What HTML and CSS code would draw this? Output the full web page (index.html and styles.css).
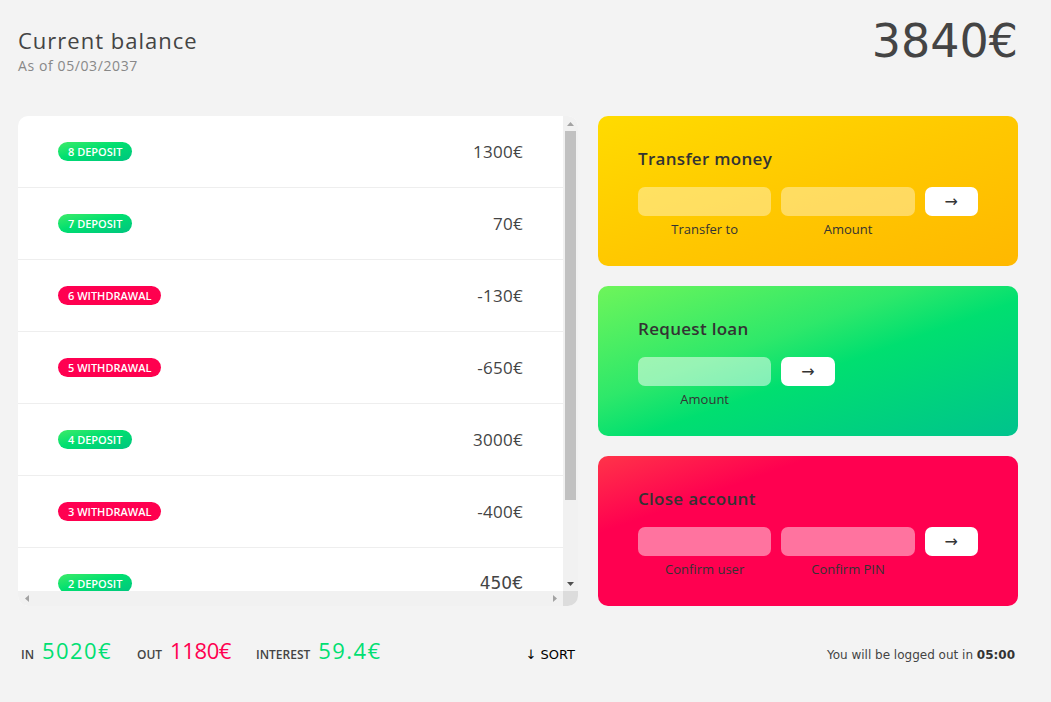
FILE: index.html
```html
<!DOCTYPE html>
<html lang="en">
<head>
<meta charset="UTF-8">
<title>Bankist</title>
<link rel="stylesheet" href="styles.css">
</head>
<body>
<main class="app">
  <div class="balance">
    <div class="balance__info">
      <p class="balance__label">Current balance</p>
      <p class="balance__date">As of <span>05/03/2037</span></p>
    </div>
    <p class="balance__value">3840€</p>
  </div>

  <section class="movements">
    <div class="movements__list">
      <div class="movements__row">
        <div class="movements__type movements__type--deposit">8 deposit</div>
        <div class="movements__value">1300€</div>
      </div>
      <div class="movements__row">
        <div class="movements__type movements__type--deposit">7 deposit</div>
        <div class="movements__value">70€</div>
      </div>
      <div class="movements__row">
        <div class="movements__type movements__type--withdrawal">6 withdrawal</div>
        <div class="movements__value">-130€</div>
      </div>
      <div class="movements__row">
        <div class="movements__type movements__type--withdrawal">5 withdrawal</div>
        <div class="movements__value">-650€</div>
      </div>
      <div class="movements__row">
        <div class="movements__type movements__type--deposit">4 deposit</div>
        <div class="movements__value">3000€</div>
      </div>
      <div class="movements__row">
        <div class="movements__type movements__type--withdrawal">3 withdrawal</div>
        <div class="movements__value">-400€</div>
      </div>
      <div class="movements__row">
        <div class="movements__type movements__type--deposit">2 deposit</div>
        <div class="movements__value movements__value--alt">450€</div>
      </div>
      <div class="movements__row">
        <div class="movements__type movements__type--withdrawal">1 withdrawal</div>
        <div class="movements__value">-790€</div>
      </div>
    </div>
    <div class="vbar">
      <div class="sb-btn"><svg width="7" height="4" viewBox="0 0 7 4"><polygon points="0,4 3.5,0 7,4" fill="#a3a3a3"/></svg></div>
      <div class="vbar__thumb"></div>
      <div class="vbar__track"></div>
      <div class="sb-btn"><svg width="7" height="4" viewBox="0 0 7 4"><polygon points="0,0 7,0 3.5,4" fill="#505050"/></svg></div>
    </div>
    <div class="hbar">
      <div class="sb-btn"><svg width="4" height="7" viewBox="0 0 4 7"><polygon points="4,0 4,7 0,3.5" fill="#a3a3a3"/></svg></div>
      <div class="sb-btn"><svg width="4" height="7" viewBox="0 0 4 7"><polygon points="0,0 4,3.5 0,7" fill="#a3a3a3"/></svg></div>
    </div>
    <div class="corner"></div>
  </section>

  <div class="operation operation--transfer">
    <h2 class="operation__title">Transfer money</h2>
    <form class="form">
      <input type="text" class="form__input">
      <input type="number" class="form__input">
      <button type="button" class="form__btn">→</button>
      <label class="form__label">Transfer to</label>
      <label class="form__label">Amount</label>
    </form>
  </div>

  <div class="operation operation--loan">
    <h2 class="operation__title">Request loan</h2>
    <form class="form form--loan">
      <input type="number" class="form__input">
      <button type="button" class="form__btn">→</button>
      <label class="form__label form__label--loan">Amount</label>
    </form>
  </div>

  <div class="operation operation--close">
    <h2 class="operation__title">Close account</h2>
    <form class="form">
      <input type="text" class="form__input">
      <input type="password" class="form__input">
      <button type="button" class="form__btn">→</button>
      <label class="form__label">Confirm user</label>
      <label class="form__label">Confirm PIN</label>
    </form>
  </div>

  <div class="summary">
    <p class="summary__label">In</p>
    <p class="summary__value summary__value--in">5020€</p>
    <p class="summary__label">Out</p>
    <p class="summary__value summary__value--out">1180€</p>
    <p class="summary__label">Interest</p>
    <p class="summary__value summary__value--interest">59.4€</p>
    <button type="button" class="btn--sort">↓ SORT</button>
  </div>

  <p class="logout-timer">You will be logged out in <span class="timer">05:00</span></p>
</main>
</body>
</html>
```

FILE: styles.css
```css
* {
  margin: 0;
  padding: 0;
  box-sizing: border-box;
}

body {
  font-family: "Open Sans", sans-serif;
  color: #444;
  background-color: #f3f3f3;
  line-height: 1.5;
}

.app {
  width: 1000px;
  margin-left: 18px;
  padding-top: 18px;
  display: grid;
  grid-template-columns: 560px 420px;
  grid-template-rows: auto repeat(3, 150px) auto;
  gap: 20px;
}

/* Balance */
.balance {
  grid-column: 1 / -1;
  display: flex;
  justify-content: space-between;
  align-items: flex-start;
  margin-bottom: 20px;
}

.balance__info {
  margin-top: 6px;
}

.balance__label {
  font-size: 22px;
  font-weight: 500;
  line-height: 33px;
  letter-spacing: 1px;
  margin-bottom: -2px;
  color: #444;
}

.balance__date {
  font-size: 14px;
  line-height: 21px;
  letter-spacing: 0.6px;
  color: #888;
}

.balance__value {
  font-family: "DejaVu Sans", sans-serif;
  font-size: 46px;
  line-height: 46px;
  color: #444;
}

/* Movements */
.movements {
  grid-column: 1;
  grid-row: 2 / span 3;
  background-color: #fff;
  border-radius: 10px;
  overflow: hidden;
  display: grid;
  grid-template-columns: 1fr 15px;
  grid-template-rows: 1fr 15px;
}

.movements__list {
  overflow: hidden;
}

.movements__row {
  height: 72px;
  padding: 0 40px;
  display: flex;
  align-items: center;
  border-bottom: 1px solid #eee;
}

.movements__type {
  font-size: 11px;
  line-height: 17px;
  font-weight: 600;
  text-transform: uppercase;
  color: #fff;
  padding: 1px 10px;
  border-radius: 100px;
  margin-right: 20px;
}

.movements__type--deposit {
  background-image: linear-gradient(to top left, #00c57f, #00df70 55%, #3feb68);
}

.movements__type--withdrawal {
  background-image: linear-gradient(to top left, #ff004d, #ff0052);
}

.movements__value {
  font-size: 17px;
  letter-spacing: 0.3px;
  margin-left: auto;
  color: #444;
}

.movements__value--alt {
  font-family: "DejaVu Sans", sans-serif;
  letter-spacing: 0;
}

/* fake scrollbars */
.vbar {
  background: #f1f1f1;
  display: flex;
  flex-direction: column;
}

.sb-btn {
  flex: none;
  width: 15px;
  height: 15px;
  display: flex;
  align-items: center;
  justify-content: center;
}

.vbar__thumb {
  flex: none;
  height: 369px;
  margin: 0 2px;
  background: #c1c1c1;
}

.vbar__track {
  flex: 1;
}

.hbar {
  background: #f1f1f1;
  display: flex;
  align-items: center;
  justify-content: space-between;
  padding: 0 1px;
}

.corner {
  background: #dcdcdc;
}

/* Operations */
.operation {
  grid-column: 2;
  border-radius: 10px;
  padding: 30px 40px;
  color: #333;
}

.operation--transfer {
  grid-row: 2;
  background-image: linear-gradient(to top left, #ffb800, #ffc800 50%, #ffdb00);
}

.operation--loan {
  grid-row: 3;
  background-image: linear-gradient(to top left, #00c38d 0%, #00df70 45%, #2ee86a 62%, #6ef55a 100%);
}

.operation--close {
  grid-row: 4;
  background-image: linear-gradient(to top left, #ff0050 0%, #ff0050 74%, #ff3449 100%);
}

.operation__title {
  font-size: 17px;
  font-weight: 600;
  line-height: 25.5px;
  letter-spacing: 0.3px;
  margin-bottom: 15px;
  color: #333;
}

.form {
  display: grid;
  grid-template-columns: 2.5fr 2.5fr 1fr;
  gap: 4px 10px;
}

.form--loan {
  grid-template-columns: 2.5fr 1fr 2.5fr;
}

.form__input {
  width: 100%;
  height: 29px;
  border: none;
  background-color: rgba(255, 255, 255, 0.38);
  border-radius: 7px;
  font-family: inherit;
  font-size: 15px;
  text-align: center;
  color: #333;
  padding: 3px 10px;
  outline: none;
}

.operation--loan .form__input {
  background-color: rgba(255, 255, 255, 0.5);
}

.operation--close .form__input {
  background-color: rgba(255, 255, 255, 0.45);
}

.form__btn {
  border: none;
  border-radius: 7px;
  background-color: #fff;
  font-family: "DejaVu Sans", sans-serif;
  font-size: 16px;
  color: #333;
}

.form__label {
  font-size: 13px;
  line-height: 19.5px;
  text-align: center;
}

.form__label--loan {
  grid-row: 2;
}

/* Summary */
.summary {
  grid-column: 1;
  grid-row: 5;
  display: flex;
  align-items: baseline;
  padding: 0 3px;
  margin-top: 8px;
}

.summary__label {
  font-size: 12px;
  font-weight: 600;
  text-transform: uppercase;
  margin-right: 8px;
  color: #444;
}

.summary__value {
  font-size: 22px;
  line-height: 33px;
  letter-spacing: 1.4px;
  margin-right: 25px;
}

.summary__value--in,
.summary__value--interest {
  color: #00df72;
}

.summary__value--out {
  color: #ff0050;
  letter-spacing: -0.4px;
}

.btn--sort {
  margin-left: auto;
  border: none;
  background: none;
  font-family: "DejaVu Sans", sans-serif;
  font-size: 13px;
  color: #000;
}

.logout-timer {
  grid-column: 2;
  grid-row: 5;
  padding: 0 3px;
  margin-top: 20px;
  text-align: right;
  font-family: "DejaVu Sans", sans-serif;
  font-size: 12px;
  line-height: 18px;
  color: #444;
}

.timer {
  font-weight: 700;
  color: #333;
}
```
